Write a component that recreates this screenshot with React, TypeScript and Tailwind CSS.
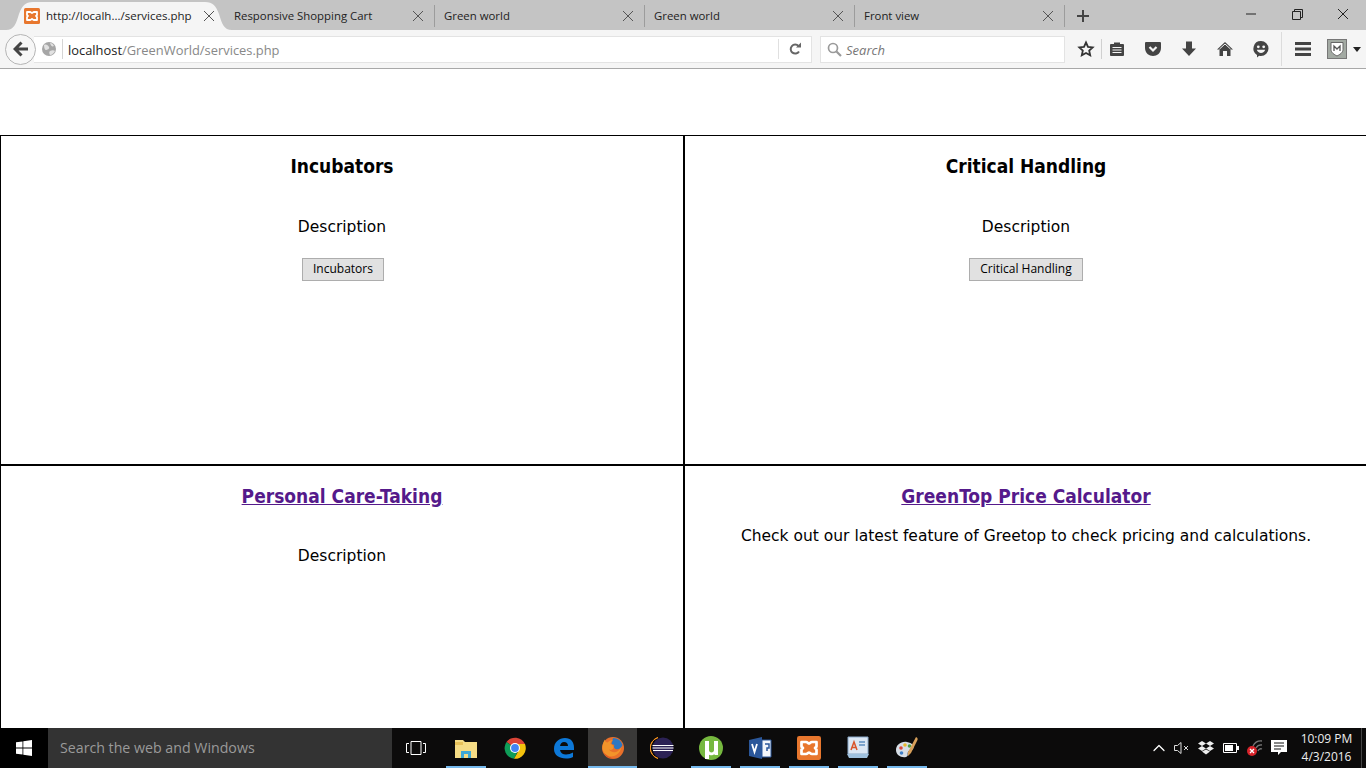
import { ChevronUp } from "lucide-react";

const chrome = "font-['Open_Sans','Noto_Sans',sans-serif]";

function XampIcon({ size = 16 }: { size?: number }) {
  return (
    <svg width={size} height={size} viewBox="0 0 16 16" className="shrink-0">
      <rect width="16" height="16" rx="1.500" fill="#e8772e" />
      <path d="M3 4h3c1 0 1.500 1 2 1s1-1 2-1h3v3c0 .5-1 .7-1 1s1 .5 1 1v3h-3c-1 0-1.500-1-2-1s-1 1-2 1H3V9c0-.5 1-.7 1-1s-1-.5-1-1z" fill="none" stroke="#fff" strokeWidth="1.800" strokeLinejoin="round" />
    </svg>
  );
}

function TabClose() {
  return (
    <svg width="12" height="12" viewBox="0 0 12 12" className="shrink-0">
      <path d="M1 1l10 10M11 1L1 11" stroke="#555" strokeWidth="1" />
    </svg>
  );
}

function Tab({ title }: { title: string }) {
  return (
    <div className="mb-[3px] flex h-[22px] w-[210px] items-center border-r border-[#9c9c9c] pl-[9px] pr-[10px]">
      <span className="flex-1 text-[11.400px] text-[#222]">{title}</span>
      <TabClose />
    </div>
  );
}

function ToolIcon({ children, w = 36, className = "" }: { children: React.ReactNode; w?: number; className?: string }) {
  return (
    <div className={`flex items-center justify-center ${className}`} style={{ width: w }}>
      <svg width="18" height="18" viewBox="0 0 18 18">
        {children}
      </svg>
    </div>
  );
}

function TabBar() {
  return (
    <div className={`flex h-[30px] items-end bg-[#c4c4c4] ${chrome}`}>
      <div className="relative ml-[14px] flex h-[28px] w-[211px] items-center pl-[10px] pr-[10px]">
        <svg width="226" height="28" viewBox="0 0 226 28" className="absolute left-[-8px] top-0">
          <path d="M0 28c8 0 10-6 13-16C16 4 19 0 27 0h172c8 0 11 4 14 12 3 10 5 16 13 16z" fill="#f5f5f5" />
        </svg>
        <div className="relative flex flex-1 items-center">
          <XampIcon />
          <span className="ml-[6px] flex-1 text-[11.500px] text-[#222]">http://localh.../services.php</span>
          <TabClose />
        </div>
      </div>
      <Tab title="Responsive Shopping Cart" />
      <Tab title="Green world" />
      <Tab title="Green world" />
      <Tab title="Front view" />
      <div className="mb-[3px] flex h-[22px] w-[35px] items-center justify-center">
        <svg width="14" height="14" viewBox="0 0 14 14">
          <path d="M7 1v12M1 7h12" stroke="#444" strokeWidth="2" />
        </svg>
      </div>
      <div className="flex-1" />
      <div className="flex h-full items-center pb-[2px]">
        <div className="flex w-[46px] justify-center">
          <svg width="10" height="10" viewBox="0 0 10 10">
            <path d="M0 5h10" stroke="#222" />
          </svg>
        </div>
        <div className="flex w-[46px] justify-center">
          <svg width="11" height="11" viewBox="0 0 11 11">
            <path d="M.5 2.500h8v8h-8zM2.500 2.500v-2h8v8h-2" fill="none" stroke="#222" />
          </svg>
        </div>
        <div className="flex w-[46px] justify-center">
          <svg width="12" height="12" viewBox="0 0 12 12">
            <path d="M1 1l10 10M11 1L1 11" stroke="#222" />
          </svg>
        </div>
      </div>
    </div>
  );
}

function NavBar() {
  return (
    <div className={`flex h-[39px] items-center border-b border-[#a8a8a8] bg-[#f5f5f5] pl-[5px] ${chrome}`}>
      <div className="z-10 flex h-[31px] w-[31px] items-center justify-center rounded-full border border-[#b5b5b5] bg-[#f7f7f7]">
        <svg width="16" height="16" viewBox="0 0 16 16">
          <path d="M8.500 1.500L2 8l6.500 6.500M2.500 8H15" fill="none" stroke="#444" strokeWidth="3" />
        </svg>
      </div>
      <div className="ml-[-2px] flex h-[27px] w-[778px] items-center border border-l-0 border-[#e3e3e3] bg-white pl-[8px]">
        <svg width="14" height="14" viewBox="0 0 14 14">
          <circle cx="7" cy="7" r="7" fill="#a6a6a6" />
          <path d="M2 3c2-1 4 0 5 2S5 8 4 8 2 6 2 3zM8 9c2-1 4-1 5 0-1 2-3 4-5 4-1-2-1-3 0-4zM8 1c2 0 3 1 4 3-2 1-3 0-4-3z" fill="#e2e2e2" />
        </svg>
        <div className="ml-[6px] h-[20px] w-px bg-[#d5d5d5]" />
        <span className="ml-[5px] flex-1 pt-[3px] text-[12.900px] text-[#888]">
          <span className="text-[#222]">localhost</span>/GreenWorld/services.php
        </span>
        <div className="h-[20px] w-px bg-[#e0e0e0]" />
        <div className="flex w-[32px] justify-center">
          <svg width="14" height="14" viewBox="0 0 14 14">
            <path d="M11 9.500A4.500 4.500 0 1 1 10.500 4" fill="none" stroke="#666" strokeWidth="2" />
            <path d="M8 5.500h5v-5z" fill="#666" />
          </svg>
        </div>
      </div>
      <div className="ml-[8px] flex h-[27px] w-[245px] items-center border border-[#e3e3e3] bg-white pl-[6px]">
        <svg width="15" height="15" viewBox="0 0 15 15">
          <circle cx="6" cy="6" r="4.500" fill="none" stroke="#9a9a9a" strokeWidth="1.700" />
          <path d="M9.500 9.500L14 14" stroke="#9a9a9a" strokeWidth="2.200" />
        </svg>
        <span className="ml-[4px] pt-[3px] text-[13px] italic text-[#777]">Search</span>
      </div>
      <div className="flex h-full items-center">
        <ToolIcon w={30} className="ml-[6px]">
          <path d="M9 2.500l2 4.300 4.700.6-3.500 3.200 1 4.700L9 13l-4.200 2.300 1-4.700-3.500-3.200 4.700-.6z" fill="none" stroke="#333" strokeWidth="1.800" />
        </ToolIcon>
        <div className="h-[20px] w-px bg-[#d0d0d0]" />
        <ToolIcon w={30}>
          <path d="M3 4h3V2.500h6V4h3c.5 0 1 .5 1 1v10c0 .5-.5 1-1 1H3c-.5 0-1-.5-1-1V5c0-.5.5-1 1-1z" fill="#444" />
          <path d="M4.500 7.500h9M4.500 10h9M4.500 12.500h9" stroke="#f5f5f5" strokeWidth="1.200" />
        </ToolIcon>
        <ToolIcon w={42}>
          <path d="M2 2h14c1 0 1 1 1 1v5c0 5-4 8-8 8s-8-3-8-8V3s0-1 1-1z" fill="#444" />
          <path d="M5.500 7L9 10.500 12.500 7" fill="none" stroke="#f5f5f5" strokeWidth="2.200" />
        </ToolIcon>
        <ToolIcon w={30}>
          <path d="M6 1.500h6v7h4L9 16 2 8.500h4z" fill="#444" />
        </ToolIcon>
        <ToolIcon w={42}>
          <path d="M9 2L1 9.500h2.500V16h3.500v-5h4v5h3.500V9.500H17z" fill="#444" />
          <path d="M3.500 9L9 4l5.500 5" fill="none" stroke="#f5f5f5" strokeWidth="1" />
        </ToolIcon>
        <ToolIcon w={30}>
          <path d="M9 1a7.500 7.500 0 0 1 0 15c-.7 0-1.300-.1-1.900-.2L5 17.500v-2.600A7.500 7.500 0 0 1 9 1z" fill="#444" />
          <circle cx="6.300" cy="6.800" r="1.400" fill="#f5f5f5" />
          <circle cx="11.700" cy="6.800" r="1.400" fill="#f5f5f5" />
          <path d="M4.800 9.800h8.400c-.5 2-2.300 3.200-4.200 3.200s-3.700-1.200-4.200-3.200z" fill="#f5f5f5" />
        </ToolIcon>
        <div className="ml-[5px] h-[34px] w-px bg-[#dcdcdc]" />
        <ToolIcon w={42}>
          <path d="M1 3.500h16M1 9h16M1 14.500h16" stroke="#444" strokeWidth="3" />
        </ToolIcon>
        <div className="ml-[3px] flex h-[20px] w-[20px] items-center justify-center border border-[#777] bg-[#a3aaa3]">
          <svg width="14" height="16" viewBox="0 0 14 16">
            <path d="M1 1.500h12v7c0 3-3 5-6 6.500-3-1.500-6-3.500-6-6.500z" fill="#fff" stroke="#666" />
            <path d="M4 10V5l3 3 3-3v5" fill="none" stroke="#555" strokeWidth="1.300" />
          </svg>
        </div>
        <svg width="8" height="5" viewBox="0 0 8 5" className="ml-[6px]">
          <path d="M0 0h8L4 5z" fill="#222" />
        </svg>
      </div>
    </div>
  );
}

function Cell({ children }: { children: React.ReactNode }) {
  return <div className="h-[330px] border border-black text-center">{children}</div>;
}

function ServiceButton({ label, width }: { label: string; width: string }) {
  return (
    <button className={`${width} h-[23px] border border-[#adadad] bg-[#e1e1e1] text-[12px] text-black font-['Open_Sans','Noto_Sans',sans-serif]`}>
      {label}
    </button>
  );
}

function Services() {
  const heading = "font-['DejaVu_Sans_Condensed','DejaVu_Sans',sans-serif] text-[19px] font-bold leading-[24px]";
  return (
    <div className="min-h-0 flex-1 overflow-hidden bg-white pt-[66px] font-['DejaVu_Sans',sans-serif] text-[15.500px] text-black">
      <div className="grid grid-cols-[684px_684px]">
        <Cell>
          <h2 className={`${heading} mt-[18px]`}>Incubators</h2>
          <p className="mt-[37px] leading-[24px]">Description</p>
          <div className="mt-[18px]">
            <ServiceButton label="Incubators" width="ml-[2px] w-[82px]" />
          </div>
        </Cell>
        <Cell>
          <h2 className={`${heading} mt-[18px]`}>Critical Handling</h2>
          <p className="mt-[37px] leading-[24px]">Description</p>
          <div className="mt-[18px]">
            <ServiceButton label="Critical Handling" width="w-[114px]" />
          </div>
        </Cell>
        <Cell>
          <h2 className={`${heading} mt-[18px] text-[#551a8b] underline`}>Personal Care-Taking</h2>
          <p className="mt-[36px] leading-[24px]">Description</p>
        </Cell>
        <Cell>
          <h2 className={`${heading} mt-[18px] text-[#551a8b] underline`}>GreenTop Price Calculator</h2>
          <p className="mt-[16px] leading-[24px]">Check out our latest feature of Greetop to check pricing and calculations.</p>
        </Cell>
      </div>
    </div>
  );
}

function TaskCell({ children, running, active }: { children: React.ReactNode; running?: boolean; active?: boolean }) {
  return (
    <div className={`relative flex h-full w-[49px] items-center justify-center ${active ? "bg-[#3a3938]" : ""}`}>
      {children}
      {running && <div className={`absolute bottom-0 h-[2px] bg-[#76b9ed] ${active ? "left-0 right-0" : "left-[5px] right-[4px]"}`} />}
    </div>
  );
}

function TaskBar() {
  return (
    <div className="flex h-[40px] items-center bg-[#0c0b0b] font-['Open_Sans','Noto_Sans',sans-serif]">
      <div className="flex h-full w-[48px] items-center justify-center bg-black">
        <svg width="16" height="16" viewBox="0 0 16 16">
          <path d="M0 2.300l6.500-.9v6.100H0zM7.300 1.300L16 0v7.500H7.300zM0 8.500h6.500v6.100L0 13.700zM7.300 8.500H16V16l-8.700-1.300z" fill="#fff" />
        </svg>
      </div>
      <div className="flex h-full w-[344px] items-center bg-[#333] pl-[12px] text-[14.200px] text-[#9a9a9a]">Search the web and Windows</div>
      <div className="flex w-[49px] justify-center pr-px">
        <svg width="20" height="14" viewBox="0 0 20 14">
          <path d="M5 .5h10v13H5zM3 2.500H.5v9H3M17 2.500h2.500v9H17" fill="none" stroke="#fff" />
        </svg>
      </div>
      <div className="flex h-full">
        <TaskCell running>
          <svg width="22" height="22" viewBox="0 0 22 22">
            <path d="M0 3h8l2 2h12v16H0z" fill="#f6dc85" />
            <path d="M0 5h8v3H0z" fill="#e8c25a" />
            <path d="M6 14h10v7h-3v-4H9v4H6z" fill="#3fa9d8" />
          </svg>
        </TaskCell>
        <TaskCell>
          <svg width="22" height="22" viewBox="0 0 22 22">
            <path d="M11 11L2.500 5A10.800 10.800 0 0 1 21 7H11z" fill="#db4437" />
            <path d="M2.500 5A10.800 10.800 0 0 0 10 21.800L14 14 11 11z" fill="#0f9d58" />
            <path d="M21 7A10.800 10.800 0 0 1 10 21.800L15 13l-1-6z" fill="#f4c20d" />
            <circle cx="11" cy="11" r="5" fill="#fff" />
            <circle cx="11" cy="11" r="3.900" fill="#4285f4" />
          </svg>
        </TaskCell>
        <TaskCell>
          <svg width="22" height="22" viewBox="0 0 22 22">
            <path d="M1 12C1 5 6 1 12 1c6 0 9 4 9 10v2H7c.5 3 3 4.500 6 4.500 2.500 0 5-.7 7-2v4.500c-2 1-4.500 1.500-7 1.500C6 21.500 1 18 1 12zm6-3h8c0-2.500-1.500-4-4-4-2 0-3.500 1.500-4 4z" fill="#0d78d8" />
          </svg>
        </TaskCell>
        <TaskCell running active>
          <svg width="24" height="24" viewBox="0 0 24 24">
            <circle cx="12" cy="12" r="11" fill="#e8702a" />
            <path d="M12 2a10 10 0 0 1 9.500 7c-1 3-4 5-7 4-2-1-2-3-1-4l-3-1c1-3 1-4 1.500-6z" fill="#2e78c2" />
            <path d="M4 3.500c0 2 1 3 2.500 3C8 5 10 4 12 4c-1.500 1-2.500 2.500-2.500 4 2 .5 3.500 2 3 4-.5 1.500-2.500 2.500-4.500 1.500 2 3 6 3.500 9 1.500 2-1.500 3-3 3.500-5-.5 6-5 10.500-10.500 10.500C5 20 1 16 1.500 11 1.700 8 2.500 5.500 4 3.500z" fill="#f2942a" />
            <path d="M3 17c2.500 4 6.500 6 11 5.500C9.500 22.500 6 20 3 17z" fill="#d9431e" />
          </svg>
        </TaskCell>
        <TaskCell>
          <svg width="24" height="24" viewBox="0 0 24 24">
            <path d="M8 1.500A11 11 0 0 0 8 22.500 11 11 0 0 1 8 1.500z" fill="#f7941e" stroke="#f7941e" />
            <circle cx="13" cy="12" r="10.500" fill="#2c2255" />
            <path d="M2.500 9.500h21M2.500 12h21M3 14.500h20" stroke="#fff" strokeWidth="1.200" />
          </svg>
        </TaskCell>
        <TaskCell running>
          <svg width="24" height="24" viewBox="0 0 24 24">
            <circle cx="12" cy="12" r="12" fill="#76b83f" />
            <path d="M6 5h4v9c0 1.500 1 2.500 2.500 2.500S15 15.500 15 14V5h4v14h-3.500v-1c-1 1-2.500 1.500-4 1.300-.5 0-1-.2-1.500-.5V23H6z" fill="#fff" />
          </svg>
        </TaskCell>
        <TaskCell running>
          <svg width="24" height="24" viewBox="0 0 24 24">
            <path d="M1 4l13-3v22L1 20z" fill="#2b579a" />
            <path d="M14 4h9v17h-9z" fill="#f4f6fa" stroke="#2b579a" />
            <path d="M4 8l2.500 8L9 8" fill="none" stroke="#fff" strokeWidth="1.800" />
            <path d="M17 8h4v4h-2v3" fill="none" stroke="#2b579a" strokeWidth="1.500" />
          </svg>
        </TaskCell>
        <TaskCell running>
          <XampIcon size={24} />
        </TaskCell>
        <TaskCell running>
          <svg width="22" height="24" viewBox="0 0 22 24">
            <path d="M1 1h20v17H1z" fill="#dbe7f4" stroke="#8aa9c9" />
            <path d="M0 18h22l-2 4H2z" fill="#9fc1de" />
            <path d="M4 14l3-8 3 8M5 11.500h4" fill="none" stroke="#d9542b" strokeWidth="1.500" />
            <path d="M12 6h6M12 9h6" stroke="#5d8fc0" strokeWidth="1.500" />
          </svg>
        </TaskCell>
        <TaskCell running>
          <svg width="24" height="24" viewBox="0 0 24 24">
            <path d="M1 14c0-5 5-9 11-8 5 1 8 4 6 7-1 2-4 1-5 3s1 4-2 5c-5 1-10-2-10-7z" fill="#d7dee6" />
            <circle cx="6" cy="12" r="1.800" fill="#d9473c" />
            <circle cx="10" cy="9" r="1.800" fill="#e9b82c" />
            <circle cx="14.500" cy="10" r="1.800" fill="#4f9e46" />
            <circle cx="6.500" cy="17" r="1.800" fill="#3f7fc8" />
            <path d="M21 1c2 1 2 2 1 4l-6 12-3 3 0-4z" fill="#d8a05a" />
          </svg>
        </TaskCell>
      </div>
      <div className="flex-1" />
      <div className="flex h-full items-center text-white">
        <div className="flex w-[24px] justify-center">
          <ChevronUp size={20} strokeWidth={1.500} />
        </div>
        <div className="flex w-[22px] justify-center">
          <svg width="16" height="14" viewBox="0 0 16 14">
            <path d="M.5 4.500h3L7 1.500v11l-3.500-3h-3zM10 5l4 4M14 5l-4 4" fill="none" stroke="#ddd" />
          </svg>
        </div>
        <div className="flex w-[26px] justify-center">
          <svg width="16" height="14" viewBox="0 0 16 14">
            <path d="M4 0l4 2.500L4 5 0 2.500zM12 0l4 2.500L12 5 8 2.500zM4 5l4 2.500L4 10 0 7.500zM12 5l4 2.500L12 10 8 7.500zM4 10.500l4-2 4 2-4 3z" fill="#eee" />
          </svg>
        </div>
        <div className="flex w-[24px] justify-center">
          <svg width="16" height="10" viewBox="0 0 16 10">
            <path d="M.5.500h13v9H.5z" fill="none" stroke="#fff" />
            <path d="M2 2h8v6H2zM14 3h2v4h-2z" fill="#fff" />
          </svg>
        </div>
        <div className="flex w-[24px] justify-center">
          <svg width="16" height="16" viewBox="0 0 16 16">
            <path d="M6 6a9 9 0 0 1 9-5M9 8a6 6 0 0 1 6-3M11 11a3 3 0 0 1 4-2" fill="none" stroke="#777" strokeWidth="1.300" />
            <circle cx="5" cy="11" r="5" fill="#d8232a" />
            <path d="M3 9l4 4M7 9l-4 4" stroke="#fff" strokeWidth="1.300" />
          </svg>
        </div>
        <div className="flex w-[24px] justify-center">
          <svg width="16" height="16" viewBox="0 0 16 16">
            <path d="M0 0h16v12h-6l-3 3v-3H0z" fill="#fff" />
            <path d="M3 3h10M3 6h10M3 9h7" stroke="#111" />
          </svg>
        </div>
        <div className="flex w-[70px] flex-col items-center pl-[1px] text-[12px] leading-[18px] text-[#eee]">
          <span>10:09 PM</span>
          <span>4/3/2016</span>
        </div>
        <div className="h-full w-px bg-[#444]" />
        <div className="w-[4px]" />
      </div>
    </div>
  );
}

export default function App() {
  return (
    <div className="flex h-screen flex-col overflow-hidden">
      <TabBar />
      <NavBar />
      <Services />
      <TaskBar />
    </div>
  );
}
